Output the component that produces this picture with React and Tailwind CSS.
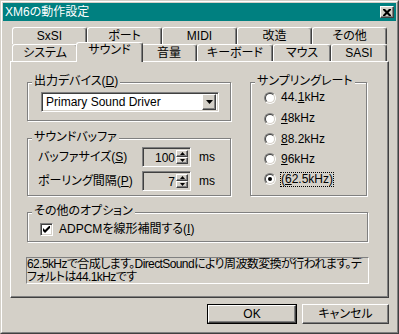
import React from 'react';

const raised =
  'border border-t-white border-l-white border-r-[#404040] border-b-[#404040] shadow-[inset_-1px_-1px_0_#808080]';
const sunken =
  'border border-t-[#808080] border-l-[#808080] border-r-white border-b-white shadow-[inset_1px_1px_0_#404040,inset_-1px_-1px_0_#d4d0c8]';
const etched = 'border border-[#808080] shadow-[inset_1px_1px_0_#fff,1px_1px_0_#fff]';

const topTabs = ['SxSI', 'ポート', 'MIDI', '改造', 'その他'];
const bottomTabs = [
  { label: 'システム', w: 'w-[66px]' },
  { label: 'サウンド', w: 'w-[67px]', active: true },
  { label: '音量', w: 'w-[56px]' },
  { label: 'キーボード', w: 'w-[76px]' },
  { label: 'マウス', w: 'w-[58px]' },
  { label: 'SASI', w: 'w-[56px]' },
];

const rates = [
  { pre: '44.', key: '1', post: 'kHz', h: 'h-[21px]' },
  { pre: '', key: '4', post: '8kHz', h: 'h-[21px]' },
  { pre: '', key: '8', post: '8.2kHz', h: 'h-[20px]' },
  { pre: '', key: '9', post: '6kHz', h: 'h-[20px]' },
  { pre: '(', key: '6', post: '2.5kHz)', h: 'h-[20px]', checked: true },
];

const Group = ({ label, className, children }) => (
  <div className={`relative ${etched} ${className}`}>
    <span className="absolute top-[-8px] left-[4px] px-[2px] bg-[#d4d0c8] leading-[13px] whitespace-nowrap">
      {label}
    </span>
    {children}
  </div>
);

const Tri = ({ up }) => (
  <svg width="5" height="3" viewBox="0 0 5 3">
    <polygon points={up ? '2.5,0 5,3 0,3' : '0,0 5,0 2.5,3'} fill="#000" />
  </svg>
);

const Spin = ({ value }) => (
  <div className={`w-[49px] h-[20px] bg-[#d4d0c8] flex p-[2px] ${sunken}`}>
    <div className="flex-1 text-right pr-[1px] leading-[16px]">{value}</div>
    <div className="w-[12px] flex flex-col">
      <div className={`h-[8px] flex items-center justify-center ${raised}`}>
        <Tri up />
      </div>
      <div className={`h-[8px] flex items-center justify-center ${raised}`}>
        <Tri />
      </div>
    </div>
  </div>
);

const Radio = ({ checked }) => (
  <div className="w-[12px] h-[12px] rounded-full border border-t-[#808080] border-l-[#808080] border-r-white border-b-white">
    <div className="w-full h-full rounded-full bg-white border border-t-[#404040] border-l-[#404040] border-r-[#d4d0c8] border-b-[#d4d0c8] flex items-center justify-center">
      {checked && <div className="w-[4px] h-[4px] rounded-full bg-black" />}
    </div>
  </div>
);

export default function App() {
  return (
    <div className="w-[399px] h-[334px] bg-[#d4d0c8] text-[12px] text-black font-['Liberation_Sans','Noto_Sans_CJK_JP',sans-serif] [font-feature-settings:'palt']">
      <div className="w-full h-full border border-t-[#d4d0c8] border-l-[#d4d0c8] border-r-[#404040] border-b-[#404040]">
        <div className="w-full h-full border border-t-white border-l-white border-r-[#808080] border-b-[#808080] p-[1px]">
          {/* title bar */}
          <div className="h-[18px] bg-[#008080] flex items-center justify-between pl-[2px] pr-[2px]">
            <span className="text-white leading-[16px]">XM6の動作設定</span>
            <div className={`w-[14px] h-[12px] bg-[#d4d0c8] flex items-center justify-center ${raised}`}>
              <svg width="8" height="7" viewBox="0 0 8 7">
                <path d="M0 0h2l2 2 2-2h2v1l-2.5 2.5L8 6v1H6L4 5 2 7H0V6l2.5-2.5L0 1z" fill="#000" />
              </svg>
            </div>
          </div>

          {/* client */}
          <div className="pt-[6px] px-[7px]">
            <div className="flex ml-[2px]">
              {topTabs.map((t) => (
                <div
                  key={t}
                  className="w-[75px] h-[17px] flex items-center justify-center border-t border-l border-r border-t-white border-l-white border-r-[#404040] shadow-[inset_-1px_0_0_#808080] rounded-t-[3px] leading-[13px]"
                >
                  {t}
                </div>
              ))}
            </div>
            <div className="flex ml-[2px] h-[17px] items-start">
              {bottomTabs.map((t) =>
                t.active ? (
                  <div
                    key={t.label}
                    className={`${t.w} -mx-[2px] -mt-[2px] h-[20px] relative z-10 bg-[#d4d0c8] flex items-center justify-center pb-[4px] border-t border-l border-r border-t-white border-l-white border-r-[#404040] shadow-[inset_-1px_0_0_#808080] rounded-t-[3px] leading-[13px]`}
                  >
                    {t.label}
                  </div>
                ) : (
                  <div
                    key={t.label}
                    className={`${t.w} h-[17px] flex items-center justify-center border-t border-l border-r border-t-white border-l-white border-r-[#404040] shadow-[inset_-1px_0_0_#808080] rounded-t-[3px] leading-[13px]`}
                  >
                    {t.label}
                  </div>
                )
              )}
            </div>

            {/* panel */}
            <div className="h-[237px] border border-t-white border-l-white border-r-[#404040] border-b-[#404040] shadow-[inset_-1px_-1px_0_#808080] pt-[20px] pl-[16px]">
              <div className="flex gap-[19px]">
                <div className="flex flex-col w-[204px]">
                  <Group
                    label={<>出力デバイス(<u>D</u>)</>}
                    className="h-[39px] pt-[9px] pl-[13px]"
                  >
                    <div className={`w-[178px] h-[20px] bg-white flex items-center p-[2px] ${sunken}`}>
                      <div className="flex-1 pl-[2px] leading-[16px] whitespace-nowrap">Primary Sound Driver</div>
                      <div className={`w-[14px] h-[16px] bg-[#d4d0c8] flex items-center justify-center ${raised}`}>
                        <svg width="7" height="4" viewBox="0 0 7 4">
                          <polygon points="0,0 7,0 3.5,4" fill="#000" />
                        </svg>
                      </div>
                    </div>
                  </Group>
                  <Group label="サウンドバッファ" className="mt-[17px] h-[58px] pt-[8px] pl-[10px]">
                    <div className="flex flex-col gap-[4px]">
                      <div className="flex items-center h-[20px]">
                        <span className="w-[104px] leading-[13px]">バッファサイズ(<u>S</u>)</span>
                        <Spin value="100" />
                        <span className="ml-[8px] leading-[13px]">ms</span>
                      </div>
                      <div className="flex items-center h-[20px]">
                        <span className="w-[104px] leading-[13px]">ポーリング間隔(<u>P</u>)</span>
                        <Spin value="7" />
                        <span className="ml-[8px] leading-[13px]">ms</span>
                      </div>
                    </div>
                  </Group>
                </div>

                <Group label="サンプリングレート" className="w-[117px] h-[114px] pt-[4px] pl-[13px]">
                  {rates.map((r) => (
                    <div key={r.key + r.post} className={`flex items-center ${r.h}`}>
                      <Radio checked={r.checked} />
                      {r.checked ? (
                        <span className="ml-[4px] border border-dotted border-black leading-[13px] whitespace-nowrap">
                          {r.pre}
                          <u>{r.key}</u>
                          {r.post}
                        </span>
                      ) : (
                        <span className="ml-[5px] leading-[13px] whitespace-nowrap">
                          {r.pre}
                          <u>{r.key}</u>
                          {r.post}
                        </span>
                      )}
                    </div>
                  ))}
                </Group>
              </div>

              <Group label="その他のオプション" className="mt-[16px] w-[341px] h-[30px] pt-[10px] pl-[12px]">
                <div className="flex items-center">
                  <div className={`w-[13px] h-[13px] bg-white flex items-center justify-center ${sunken}`}>
                    <svg width="7" height="7" viewBox="0 0 7 7">
                      <path d="M0 2v3l2 2 5-5V-1L2 4z" fill="#000" />
                    </svg>
                  </div>
                  <span className="ml-[6px] leading-[13px]">
                    ADPCMを線形補間する(<u>I</u>)
                  </span>
                </div>
              </Group>

              <div className="mt-[15px] -ml-[1px] w-[343px] h-[27px] border border-t-[#808080] border-l-[#808080] border-r-white border-b-white leading-[13px] tracking-[-0.6px] overflow-hidden">
                <div className="whitespace-nowrap">62.5kHzで合成します。DirectSoundにより周波数変換が行われます。デ</div>
                <div className="whitespace-nowrap">フォルトは44.1kHzです</div>
              </div>
            </div>

            {/* buttons */}
            <div className="mt-[6px] flex justify-end gap-[5px]">
              <div className="w-[90px] h-[20px] border border-black">
                <div className={`w-full h-full flex items-center justify-center leading-[13px] ${raised}`}>OK</div>
              </div>
              <div className={`w-[87px] h-[20px] flex items-center justify-center leading-[13px] ${raised}`}>
                キャンセル
              </div>
            </div>
          </div>
        </div>
      </div>
    </div>
  );
}
